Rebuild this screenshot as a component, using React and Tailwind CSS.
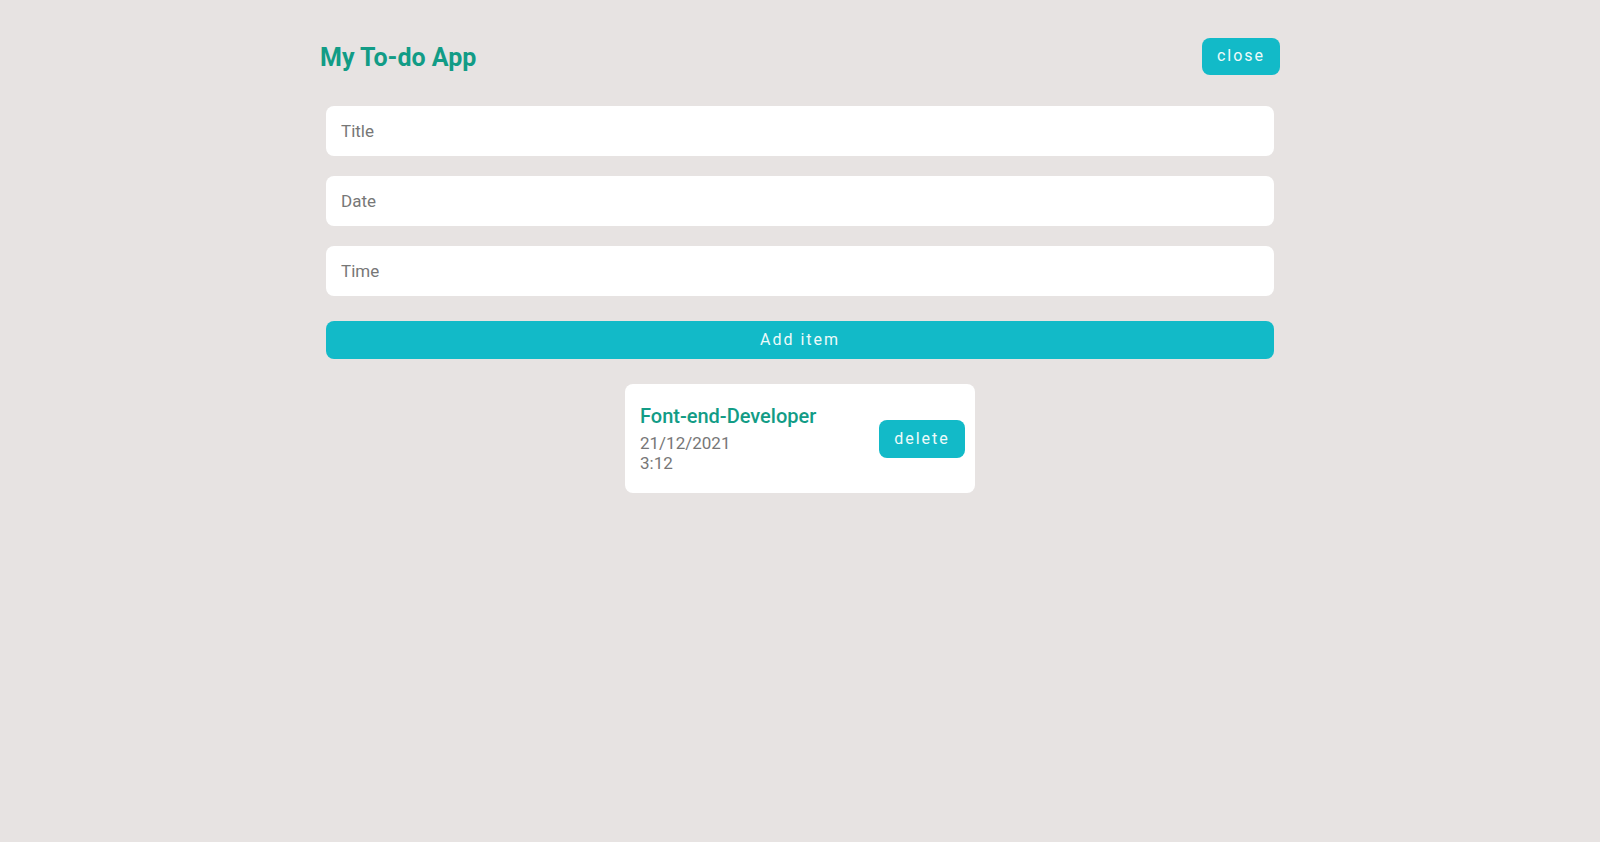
import React, { useState } from "react";

const App = () => {
  const [items, setItems] = useState([
    { id: 1, title: "Font-end-Developer", date: "21/12/2021", time: "3:12" },
  ]);
  const [title, setTitle] = useState("");
  const [date, setDate] = useState("");
  const [time, setTime] = useState("");

  const addItem = () => {
    if (!title) return;
    setItems([...items, { id: Date.now(), title, date, time }]);
    setTitle("");
    setDate("");
    setTime("");
  };

  const inputClass =
    "h-[50px] w-full rounded-lg bg-white px-[15px] text-[17px] text-gray-700 placeholder-[#777777] outline-none";

  return (
    <div
      className="min-h-screen bg-[#e7e3e2]"
      style={{ fontFamily: "Roboto, 'Liberation Sans', sans-serif" }}
    >
      <div className="mx-auto w-[960px] pt-[36px]">
        {/* Header */}
        <div className="flex items-center justify-between">
          <h1 className="pt-[3px] text-[25px] font-bold text-[#129c86]">My To-do App</h1>
          <button className="h-[37px] w-[78px] rounded-lg bg-[#12bac8] text-[16px] tracking-[2px] text-[#eefafa]">
            close
          </button>
        </div>

        {/* Form */}
        <div className="mx-[6px] mt-[29px] flex flex-col gap-5">
          <input
            className={inputClass}
            placeholder="Title"
            value={title}
            onChange={(e) => setTitle(e.target.value)}
          />
          <input
            className={inputClass}
            placeholder="Date"
            value={date}
            onChange={(e) => setDate(e.target.value)}
          />
          <input
            className={inputClass}
            placeholder="Time"
            value={time}
            onChange={(e) => setTime(e.target.value)}
          />
        </div>
        <div className="mx-[6px] mt-[25px]">
          <button
            onClick={addItem}
            className="h-[38px] w-full rounded-lg bg-[#12bac8] text-[16px] tracking-[2px] text-[#eefafa]"
          >
            Add item
          </button>
        </div>

        {/* List */}
        <div className="mt-[25px] flex flex-col items-center gap-4">
          {items.map((item) => (
            <div
              key={item.id}
              className="flex h-[109px] w-[350px] items-center justify-between rounded-lg bg-white pl-[15px] pr-[10px]"
            >
              <div>
                <h2 className="text-[20px] font-medium leading-6 text-[#129c86]">
                  {item.title}
                </h2>
                <p className="mt-[5px] text-[17px] leading-5 text-[#777777]">
                  {item.date}
                </p>
                <p className="text-[17px] leading-5 text-[#777777]">{item.time}</p>
              </div>
              <button
                onClick={() => setItems(items.filter((i) => i.id !== item.id))}
                className="mt-[2px] h-[38px] w-[86px] rounded-lg bg-[#12bac8] text-[16px] tracking-[2px] text-[#eefafa]"
              >
                delete
              </button>
            </div>
          ))}
        </div>
      </div>
    </div>
  );
};

export default App;
